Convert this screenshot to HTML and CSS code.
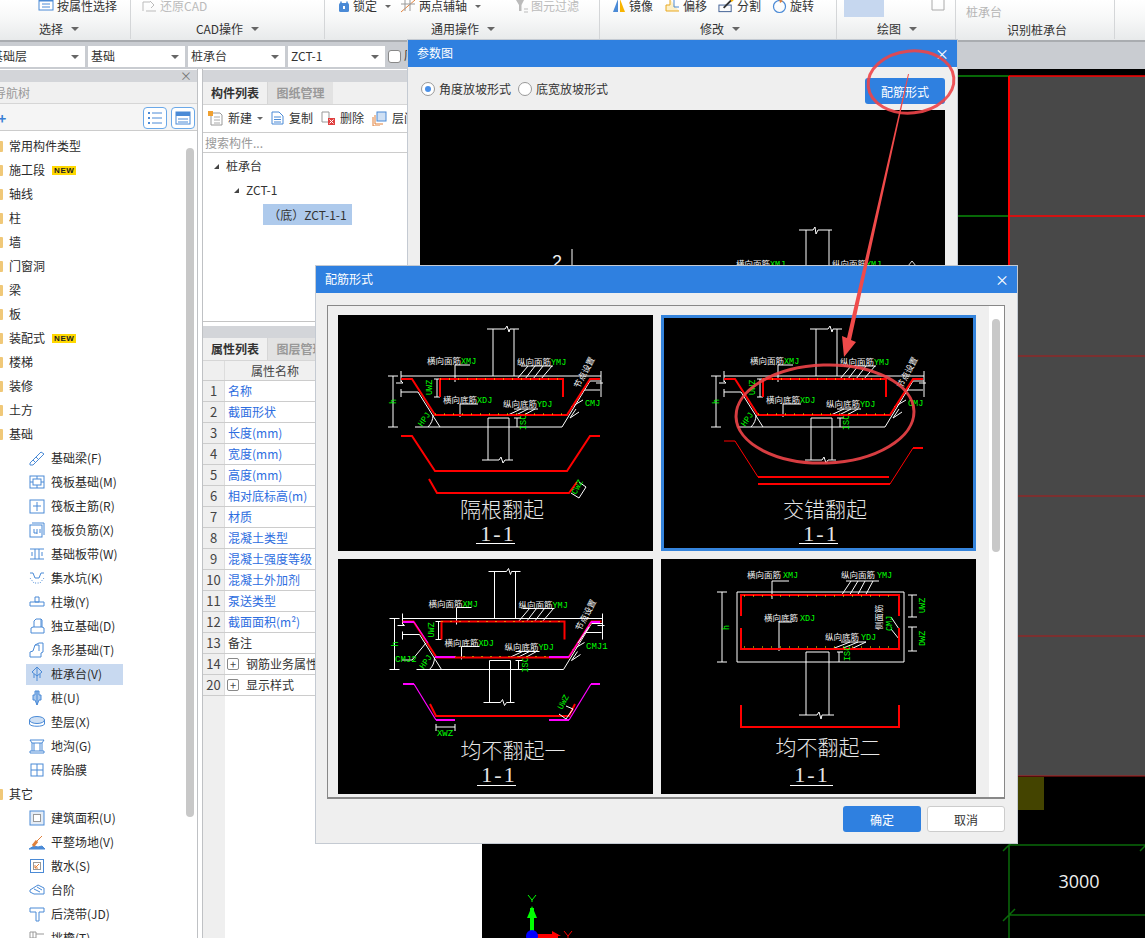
FILE: index.html
```html
<!DOCTYPE html>
<html lang="zh-CN">
<head>
<meta charset="utf-8">
<title>参数图</title>
<link rel="stylesheet" href="styles.css">
</head>
<body>
<div class="app">
  <header class="ribbon">
    <section class="rgroup g1">
      <div class="rtop"><span class="ri"><svg class="svg" width="16" height="15" viewBox="0 0 16 15"><rect x="1" y="-3" width="14" height="14" fill="#fff" stroke="#4a8ad6"/><path d="M1 1H15" stroke="#4a8ad6" stroke-width="3"/><path d="M4 5H12M4 8H12" stroke="#4a8ad6"/></svg>按属性选择</span></div>
      <div class="rlabel">选择<i class="caret"></i></div>
    </section>
    <section class="rgroup g2">
      <div class="rtop"><span class="ri off"><svg class="svg" width="15" height="13" viewBox="0 0 15 13"><path d="M1 11V2H8M14 11H4M8 1L12 5L9 8" fill="none" stroke="#bbb"/></svg>还原CAD</span></div>
      <div class="rlabel">CAD操作<i class="caret"></i></div>
    </section>
    <section class="rgroup g3">
      <div class="rtop">
        <span class="ri"><svg class="svg" width="12" height="13" viewBox="0 0 12 13"><rect x="1" y="3" width="10" height="9" rx="1.500" fill="#4a8ad6"/><path d="M3 4V1.500M9 4V1.500" stroke="#4a8ad6" stroke-width="1.500"/><rect x="5" y="6" width="2" height="3" fill="#fff"/></svg>锁定<i class="caret sm"></i></span>
        <span class="ri"><svg class="svg" width="16" height="14" viewBox="0 0 16 14"><path d="M1 13L15 1" stroke="#e0803a"/><path d="M5 0V12M10 0V12M1 5H15" stroke="#999"/></svg>两点辅轴<i class="caret sm"></i></span>
        <span class="ri off"><svg class="svg" width="12" height="13" viewBox="0 0 12 13"><path d="M0 0H8L5.500 5V11H3V5Z" fill="#bbb"/><path d="M8 9H12M8 12H12" stroke="#bbb"/></svg>图元过滤</span>
      </div>
      <div class="rlabel">通用操作<i class="caret"></i></div>
    </section>
    <section class="rgroup g4">
      <div class="rtop">
        <span class="ri"><svg class="svg" width="14" height="14" viewBox="0 0 14 14"><path d="M6 0V13H1Z" fill="#4a8ad6"/><path d="M8 0V13H13Z" fill="#f8b400"/></svg>镜像</span>
        <span class="ri"><svg class="svg" width="16" height="14" viewBox="0 0 16 14"><path d="M6 0V6H2V12H15" fill="#fdf0c8" stroke="#e8a820"/><path d="M10 0V8H15" fill="none" stroke="#4a8ad6"/></svg>偏移</span>
        <span class="ri"><svg class="svg" width="16" height="14" viewBox="0 0 17 14"><rect x="1" y="6" width="13" height="7" fill="none" stroke="#3a5a90"/><path d="M6 9L14 1" stroke="#333" stroke-width="2"/><path d="M14 2L16 0" stroke="#f8b400" stroke-width="2"/></svg>分割</span>
        <span class="ri"><svg class="svg" width="15" height="15" viewBox="0 0 15 15"><circle cx="7.500" cy="7.500" r="6" fill="none" stroke="#4a8ad6" stroke-width="1.200"/><path d="M7 0L11 2L8 4Z" fill="#e0803a"/></svg>旋转</span>
      </div>
      <div class="rlabel">修改<i class="caret"></i></div>
    </section>
    <section class="rgroup g5">
      <div class="rtop"><span class="blueblock"></span><svg class="squareic" width="16" height="11" viewBox="0 0 16 11"><path d="M2 0V10H14V0" fill="none" stroke="#aaa"/></svg></div>
      <div class="rlabel">绘图<i class="caret"></i></div>
    </section>
    <section class="rgroup g6">
      <div class="rmuted">桩承台</div>
      <div class="rlabel last">识别桩承台</div>
    </section>
    <section class="rgroup g7"></section>
  </header>

  <div class="combobar">
    <div class="combo first"><span class="clip">基础层</span><i class="caret dark"></i></div>
    <div class="combo"><span>基础</span><i class="caret dark"></i></div>
    <div class="combo"><span>桩承台</span><i class="caret dark"></i></div>
    <div class="combo"><span>ZCT-1</span><i class="caret dark"></i></div>
    <span class="check"></span><span class="checktext">底</span>
  </div>

  <main class="workspace">
    <aside class="nav">
      <div class="strip"><span class="stripx">×</span></div>
      <div class="navtitle"><span class="clipt">导航树</span></div>
      <div class="navtools">
        <span class="plus">+</span>
        <span class="toolbtn"><svg width="16" height="14" viewBox="0 0 16 14"><path d="M1 2H3M1 7H3M1 12H3" stroke="#4a8ad6" stroke-width="2"/><path d="M5 2H15M5 7H15M5 12H15" stroke="#4a8ad6"/></svg></span>
        <span class="toolbtn"><svg width="16" height="14" viewBox="0 0 16 14"><rect x="1" y="1" width="14" height="12" fill="#fff" stroke="#4a8ad6"/><rect x="1" y="1" width="14" height="4" fill="#4a8ad6"/><path d="M3 8H13M3 11H13" stroke="#4a8ad6"/></svg></span>
      </div>
      <div class="navbody">
        <ul class="tree">
          <li class="node"><i class="folder"></i>常用构件类型</li>
          <li class="node"><i class="folder"></i>施工段<b class="new">NEW</b></li>
          <li class="node"><i class="folder"></i>轴线</li>
          <li class="node"><i class="folder"></i>柱</li>
          <li class="node"><i class="folder"></i>墙</li>
          <li class="node"><i class="folder"></i>门窗洞</li>
          <li class="node"><i class="folder"></i>梁</li>
          <li class="node"><i class="folder"></i>板</li>
          <li class="node"><i class="folder"></i>装配式<b class="new">NEW</b></li>
          <li class="node"><i class="folder"></i>楼梯</li>
          <li class="node"><i class="folder"></i>装修</li>
          <li class="node"><i class="folder"></i>土方</li>
          <li class="node"><i class="folder"></i>基础</li>
          <li class="leafrow"><span class="leaf"><svg class="ic" viewBox="0 0 16 16"><path d="M1 13L12 2L15 4L4 15H1ZM4 10L7 13M7 7L10 10"/></svg>基础梁(F)</span></li>
          <li class="leafrow"><span class="leaf"><svg class="ic" viewBox="0 0 16 16"><rect x="1" y="2" width="14" height="12"/><rect x="4" y="5" width="8" height="6"/><path d="M1 8H4M12 8H15M8 2V5M8 11V14"/></svg>筏板基础(M)</span></li>
          <li class="leafrow"><span class="leaf"><svg class="ic" viewBox="0 0 16 16"><rect x="1" y="2" width="14" height="13"/><path d="M8 4V13M4 8H12"/></svg>筏板主筋(R)</span></li>
          <li class="leafrow"><span class="leaf"><svg class="ic" viewBox="0 0 16 16"><rect x="1" y="3" width="12" height="12"/><path d="M3 1H15V13M5 7V11H8M8 7V12M11 7V11"/></svg>筏板负筋(X)</span></li>
          <li class="leafrow"><span class="leaf"><svg class="ic" viewBox="0 0 16 16"><path d="M1 3H15M1 13H15M6 3V13M10 3V13M3 6V10M13 6V10"/></svg>基础板带(W)</span></li>
          <li class="leafrow"><span class="leaf"><svg class="ic" viewBox="0 0 16 16"><path d="M1 3H4L6 8H10L12 3H15"/><path d="M1 8L5 13H11L15 8" stroke-dasharray="1 1.500"/></svg>集水坑(K)</span></li>
          <li class="leafrow"><span class="leaf"><svg class="ic" viewBox="0 0 16 16"><path d="M6 3H10V8H6ZM1 8H15V12H1Z"/></svg>柱墩(Y)</span></li>
          <li class="leafrow"><span class="leaf"><svg class="ic" viewBox="0 0 16 16"><path d="M5 9V3L7 1H12V9M2 15V10L4 9H13L15 10V15ZM12 1L13 2V9"/></svg>独立基础(D)</span></li>
          <li class="leafrow"><span class="leaf"><svg class="ic" viewBox="0 0 16 16"><path d="M1 15V10L4 9L6 3L10 1H14V10L12 11V15ZM6 3H10L10 9"/></svg>条形基础(T)</span></li>
          <li class="leafrow"><span class="leaf sel"><svg class="ic" viewBox="0 0 16 16"><path d="M8 1L13 6L8 10L3 6ZM8 1V15M5 8V12M11 8V12"/></svg>桩承台(V)</span></li>
          <li class="leafrow"><span class="leaf"><svg class="ic" viewBox="0 0 16 16"><path d="M6 1H10V5H12V10H10L8 15L6 10H4V5H6Z" fill="#a8c8ee"/><path d="M8 1V15"/></svg>桩(U)</span></li>
          <li class="leafrow"><span class="leaf"><svg class="ic" viewBox="0 0 16 16"><ellipse cx="8" cy="6" rx="7.500" ry="3.500" fill="#cfe0f4"/><path d="M0.500 6V10C1 13 15 13 15.500 10V6"/></svg>垫层(X)</span></li>
          <li class="leafrow"><span class="leaf"><svg class="ic" viewBox="0 0 16 16"><path d="M1 2H15L13 5H3ZM3 5V13M5 5V13M11 5V13M13 5V13M1 13H15V15H1Z"/></svg>地沟(G)</span></li>
          <li class="leafrow"><span class="leaf"><svg class="ic" viewBox="0 0 16 16"><rect x="2" y="2" width="12" height="12"/><path d="M8 2V14M2 8H14"/></svg>砖胎膜</span></li>
          <li class="node"><i class="folder"></i>其它</li>
          <li class="leafrow"><span class="leaf"><svg class="ic" viewBox="0 0 16 16"><rect x="1" y="1" width="14" height="14" fill="#e4ecf6"/><rect x="4.500" y="4.500" width="7" height="7" stroke="#999" fill="#fff"/></svg>建筑面积(U)</span></li>
          <li class="leafrow"><span class="leaf"><svg class="ic" viewBox="0 0 16 16"><path d="M0 15L5 12L9 13L13 12L16 15Z" fill="#4a8ad6"/><path d="M4 12L8 7" stroke="#e0803a" stroke-width="3"/><path d="M8 7L13 2" stroke="#e0803a"/></svg>平整场地(V)</span></li>
          <li class="leafrow"><span class="leaf"><svg class="ic" viewBox="0 0 16 16"><rect x="1.500" y="1.500" width="13" height="13"/><rect x="4.500" y="4.500" width="7" height="7" stroke="#999"/><path d="M10 6L6 10M6 7V10H9" stroke="#e0803a"/></svg>散水(S)</span></li>
          <li class="leafrow"><span class="leaf"><svg class="ic" viewBox="0 0 16 16"><path d="M1 8L9 3L15 6V12H5L1 10ZM5 7L11 10M8 5L13 8"/></svg>台阶</span></li>
          <li class="leafrow"><span class="leaf"><svg class="ic" viewBox="0 0 16 16"><path d="M1 2H15V6H10V15H7V6H1Z"/></svg>后浇带(JD)</span></li>
          <li class="leafrow"><span class="leaf"><svg class="ic" viewBox="0 0 16 16"><path d="M1 2H7V15H1ZM1 8H7M4 2V15M7 4H15" stroke="#999"/></svg>挑檐(T)</span></li>
        </ul>
        <div class="navscroll"><span class="navthumb"></span></div>
      </div>
    </aside>

    <section class="mid">
      <div class="strip"></div>
      <div class="tabs">
        <span class="tab on">构件列表</span><span class="tab">图纸管理</span>
      </div>
      <div class="midtools">
        <span class="mt t-new"><svg class="svg" width="15" height="15" viewBox="0 0 15 15"><path d="M3 2H12L14 4V14H3Z" fill="#fff" stroke="#999"/><path d="M6 6H12M6 9H12M6 12H12" stroke="#aaa"/><rect x="0" y="0" width="5" height="5" fill="#f0a030"/></svg>新建<i class="caret sm"></i></span>
        <span class="mt t-copy"><svg class="svg" width="13" height="14" viewBox="0 0 13 14"><path d="M1 1H8L12 5V13H1Z" fill="#fff" stroke="#4a8ad6"/><path d="M3 6H10M3 8.500H10M3 11H10" stroke="#4a8ad6"/></svg>复制</span>
        <span class="mt t-del"><svg class="svg" width="14" height="14" viewBox="0 0 14 14"><path d="M1 1H8V11H1Z" fill="none" stroke="#999"/><rect x="7" y="7" width="7" height="7" fill="#e04040"/><path d="M8.500 8.500L12.500 12.500M12.500 8.500L8.500 12.500" stroke="#fff"/></svg>删除</span>
        <span class="mt"><svg class="svg" width="15" height="15" viewBox="0 0 15 15"><rect x="5" y="1" width="9" height="9" fill="#cfe0f4" stroke="#4a8ad6"/><path d="M3 4V13H11M1 6V15H8" fill="none" stroke="#e0803a"/></svg>层间复制</span>
      </div>
      <div class="search">搜索构件...</div>
      <div class="comptree">
        <div class="ctrow"><i class="tri"></i>桩承台</div>
        <div class="ctrow l2"><i class="tri"></i>ZCT-1</div>
        <div class="ctrow l3"><span class="ctsel">（底）ZCT-1-1</span></div>
      </div>
      <div class="strip"></div>
      <div class="tabs small">
        <span class="tab on">属性列表</span><span class="tab">图层管理</span>
      </div>
      <div class="ptable">
        <div class="prow head"><span class="pn"></span><span class="pname">属性名称</span></div>
        <div class="prow"><span class="pn">1</span><span class="pname link">名称</span></div>
        <div class="prow"><span class="pn">2</span><span class="pname link">截面形状</span></div>
        <div class="prow"><span class="pn">3</span><span class="pname link">长度(mm)</span></div>
        <div class="prow"><span class="pn">4</span><span class="pname link">宽度(mm)</span></div>
        <div class="prow"><span class="pn">5</span><span class="pname link">高度(mm)</span></div>
        <div class="prow"><span class="pn">6</span><span class="pname link">相对底标高(m)</span></div>
        <div class="prow"><span class="pn">7</span><span class="pname link">材质</span></div>
        <div class="prow"><span class="pn">8</span><span class="pname link">混凝土类型</span></div>
        <div class="prow"><span class="pn">9</span><span class="pname link">混凝土强度等级</span></div>
        <div class="prow"><span class="pn">10</span><span class="pname link">混凝土外加剂</span></div>
        <div class="prow"><span class="pn">11</span><span class="pname link">泵送类型</span></div>
        <div class="prow"><span class="pn">12</span><span class="pname link">截面面积(m²)</span></div>
        <div class="prow"><span class="pn">13</span><span class="pname">备注</span></div>
        <div class="prow"><span class="pn">14</span><span class="pname"><i class="pbox">+</i>钢筋业务属性</span></div>
        <div class="prow"><span class="pn">20</span><span class="pname"><i class="pbox">+</i>显示样式</span></div>
      </div>
    </section>

    <section class="cad">
      <svg class="cadsvg" width="663" height="869" viewBox="482 69 663 869">
        <rect x="1009" y="76" width="136" height="700" fill="#484848"/>
        <path d="M957 76H1009M957 216H1009" stroke="#0a8a0a" stroke-width="1.500"/>
        <path d="M1009 76H1145M1009 216H1145" stroke="#f00" stroke-width="1.500"/>
        <path d="M1009 356H1145M1009 496H1145M1009 636H1145M1009 776H1145" stroke="#b01818"/>
        <path d="M1009 76V776" stroke="#f00" stroke-width="2"/>
        <rect x="1017" y="777" width="27" height="33" fill="#444400"/>
        <path d="M1009 845H1145M1009 915H1145M1009 845V938M1003 851L1015 839M1003 921L1015 909M1140 851L1145 846" stroke="#0a6a0a" stroke-width="1.500"/>
        <text x="1079" y="888" class="cadtext">3000</text>
        <path d="M532 935V908" stroke="#0f0" stroke-width="4"/>
        <path d="M532 906L527 918H537Z" fill="#0f0"/>
        <path d="M532 902V900M528 895L532 900L536 895" stroke="#0f0" fill="none"/>
        <path d="M535 936H558" stroke="#f00" stroke-width="4"/>
        <path d="M552 931L561 936H552Z" fill="#f00"/>
        <circle cx="532" cy="936" r="6" fill="#00f"/>
        <path d="M564 931L568 936L572 931M568 936V938" stroke="#f00" fill="none"/>
      </svg>
    </section>
  </main>

  <div class="dialog d1">
    <div class="dtitle">参数图<span class="dx">×</span></div>
    <div class="d1head">
      <label class="radio"><i class="rd on"></i>角度放坡形式</label>
      <label class="radio"><i class="rd"></i>底宽放坡形式</label>
      <button class="btn primary wide" type="button">配筋形式</button>
    </div>
    <div class="d1canvas">
      <svg width="525" height="160" viewBox="420 110 525 160">
        <path d="M799 230H813L815 227L816 234L818 230H832M806 230V266M829 230V266M572 249V266" stroke="#fff" fill="none"/>
        <text x="552" y="268" class="big2">2</text>
        <text x="736" y="267" class="lb">横向面筋<tspan class="gr">XMJ</tspan></text>
        <text x="832" y="267" class="lb">纵向面筋<tspan class="gr">YMJ</tspan></text>
        <path d="M908 266L912 261L916 266" stroke="#ddd" fill="none"/>
      </svg>
    </div>
  </div>

  <div class="dialog d2">
    <div class="dtitle">配筋形式<span class="dx">×</span></div>
    <div class="d2body">
      <div class="listbox">
        <div class="grid">
          <figure class="panel">
            <svg width="315" height="236" viewBox="0 0 315 236">
              <defs>
                <g id="base">
                  <path class="w" d="M149 14H167L169 11L171 17L172 14H181M155 14V61M176 14V61M63 61H263M63 56V67M58 68H65L63 66M63 74V82M63 77H80L102 112M77 112H224L252 66H263M245 75H262M263 56V82M258 68H265M55 61V112M50 61H60M50 112H60M99 64V82M96 64H102M96 82H102M150 145V103H171V145M144 145H161L163 142L165 148L167 145H175M179 103V112M176 103H183M90 112A17 17 0 0 0 95 100M132 50H117V67M183 51H215M190 51L179 64M197 51L187 64M205 51L195 64M214 51L203 64M140 89H122V102M176 94H200M183 94L170 100M190 94L178 100M197 94L186 100M238 94L232 103L241 97M233 92L245 85"/>
                  <text x="89" y="49" class="lb">横向面筋<tspan class="gr">XMJ</tspan></text>
                  <text x="179" y="50" class="lb">纵向面筋<tspan class="gr">YMJ</tspan></text>
                  <text x="105" y="88" class="lb">横向底筋<tspan class="gr">XDJ</tspan></text>
                  <text x="165" y="92" class="lb">纵向底筋<tspan class="gr">YDJ</tspan></text>
                  <text x="0" y="0" class="lb gr" transform="translate(94 80) rotate(-90)">UWZ</text>
                  <text x="0" y="0" class="lb gr" transform="translate(58 89) rotate(-90)">h</text>
                  <text x="0" y="0" class="lb gr" transform="translate(84 112) rotate(-55)">HPJ</text>
                  <text x="0" y="0" class="lb gr" transform="translate(188 115) rotate(-90)">ISC</text>
                  <text x="0" y="0" class="lb" transform="translate(241 74) rotate(-62)">节点设置</text>
                </g>
                <g id="toprebar">
                  <path class="r2" d="M63 64H74L97 100H229L252 64H262M102 82V64H225V82"/>
                  <path class="dots" d="M102 64H225M97 99H229"/>
                </g>
              </defs>
              <use href="#base"/><use href="#toprebar"/>
              <text x="247" y="91" class="lb gr">CMJ</text>
              <path class="r2" d="M63 121H74L97 156H229L252 121H262M91 164L99 178H231L239 167"/>
              <path class="w" d="M233 178L241 183L248 172L241 167"/>
              <text x="0" y="0" class="lb gr" transform="translate(238 180) rotate(-62)">CWZ</text>
              <text x="164" y="202" class="ttl">隔根翻起</text>
              <text x="160" y="226" class="ttl one">1-1</text>
              <path class="w" d="M138 228.500H177"/>
            </svg>
          </figure>
          <figure class="panel chosen">
            <svg width="315" height="236" viewBox="0 0 315 236">
              <use href="#base"/><use href="#toprebar"/>
              <text x="247" y="91" class="lb gr">CMJ</text>
              <path class="r1" d="M63 126H74L97 162"/><path class="r2" d="M97 162H228M97 169H229"/><path class="r1" d="M229 169L252 133"/><path class="r2" d="M252 133H262"/>
              <text x="164" y="202" class="ttl">交错翻起</text>
              <text x="160" y="226" class="ttl one">1-1</text>
              <path class="w" d="M138 228.500H177"/>
            </svg>
          </figure>
          <figure class="panel">
            <svg width="315" height="235" viewBox="0 0 315 235">
              <g transform="translate(1.500 -1.500)"><use href="#base"/><use href="#toprebar"/></g>
              <path class="m2" d="M65 63H76M97 98H117M211 98H231M253 63H262"/>
              <path class="m1" d="M76 63L90 84M231 98L253 63"/>
              <path class="w" d="M64 101H74L88 84M240 84L251 68"/>
              <text x="57" y="103" class="lb gr wide2">CMJ2</text>
              <text x="248" y="90" class="lb gr wide2">CMJ1</text>
              <path class="m2" d="M65 125H76M98 161H117M211 161H231M253 125H262"/>
              <path class="m1" d="M76 125L98 161M231 161L253 125"/>
              <path class="r2" d="M92 145L98 157H231L237 145"/>
              <path class="w" d="M98 165V172M117 165V172M98 168H117M228 147L235 150L228 160L221 155"/>
              <text x="107" y="177" class="lb gr wide2" text-anchor="middle">XWZ</text>
              <text x="0" y="0" class="lb gr" transform="translate(224 151) rotate(-62)">UWZ</text>
              <text x="175" y="199" class="ttl">均不翻起一</text>
              <text x="161" y="223" class="ttl one">1-1</text>
              <path class="w" d="M139 226.500H178"/>
            </svg>
          </figure>
          <figure class="panel">
            <svg width="315" height="235" viewBox="0 0 315 235">
              <path class="w" d="M76 33H243V103H76ZM61 33V103M56 33H66M56 103H66M145 156V93H168V156M138 156H156L158 153L160 160L161 156H173M178 93V103M176 93H182M111 22H128M111 22V40M185 22H218M190 22L180 37M197 22L188 37M204 22L196 37M212 22L204 37M131 63H118V92M180 83H205M189 83L171 90M197 83L180 90M205 83L190 90M247 36H256M251 36V58M247 58H256M247 68H256M251 68V92M247 92H256M230 58L238 70L238 80L230 70"/>
              <path class="r2" d="M80 57V36H238V57M80 69V90H238V69M80 146V168H238V146"/>
              <path class="dots" d="M83 37H236M83 88H236"/>
              <text x="86" y="19" class="lb">横向面筋 <tspan class="gr">XMJ</tspan></text>
              <text x="180" y="19" class="lb">纵向面筋 <tspan class="gr">YMJ</tspan></text>
              <text x="103" y="62" class="lb">横向底筋 <tspan class="gr">XDJ</tspan></text>
              <text x="164" y="81" class="lb">纵向底筋 <tspan class="gr">YDJ</tspan></text>
              <text x="0" y="0" class="lb gr" transform="translate(68 71) rotate(-90)">h</text>
              <text x="0" y="0" class="lb" transform="translate(221 71) rotate(-90)">侧面筋</text>
              <text x="0" y="0" class="lb gr" transform="translate(231 72) rotate(-90)">CMJ</text>
              <text x="0" y="0" class="lb gr" transform="translate(264 54) rotate(-90)">UWZ</text>
              <text x="0" y="0" class="lb gr" transform="translate(264 87) rotate(-90)">DWZ</text>
              <text x="0" y="0" class="lb gr" transform="translate(189 102) rotate(-90)">ISC</text>
              <text x="167" y="196" class="ttl">均不翻起二</text>
              <text x="151" y="223" class="ttl one">1-1</text>
              <path class="w" d="M129 226.500H172"/>
            </svg>
          </figure>
        </div>
        <div class="lscroll"><span class="lthumb"></span></div>
      </div>
      <div class="dfoot">
        <button class="btn primary" type="button">确定</button>
        <button class="btn plain" type="button">取消</button>
      </div>
    </div>
  </div>

  <svg class="marks" width="1145" height="938" viewBox="0 0 1145 938">
    <ellipse cx="911" cy="82" rx="43" ry="31" class="mk" transform="rotate(-6 911 82)"/>
    <ellipse cx="825" cy="414" rx="89" ry="49" class="mk" transform="rotate(-2 825 414)"/>
    <path d="M908 74L909 74L851 340L856 342L844 357L842 336L847 338Z" fill="#f04a4a"/>
  </svg>
</div>
</body>
</html>
```
FILE: styles.css
```css
* { box-sizing: border-box; }
html, body { margin: 0; padding: 0; }
body { width: 1145px; height: 938px; overflow: hidden; background: #fff; color: #333; font: 12px/1.2 "Noto Sans CJK SC", "Liberation Sans", sans-serif; }
ul { list-style: none; margin: 0; padding: 0; }
figure { margin: 0; }
i { font-style: normal; }
svg { display: block; }
.svg { flex: none; }

.app { position: relative; width: 1145px; height: 938px; overflow: hidden; display: flex; flex-direction: column; }

/* ribbon */
.ribbon { height: 42px; flex: none; display: flex; background: linear-gradient(#fff 0, #f7f8f8 45%, #e8eaeb 100%); border-bottom: 2px solid #a9acb0; }
.rgroup { display: flex; flex-direction: column; border-right: 1px solid #d4d6d8; height: 39px; overflow: hidden; }
.g1 { width: 131px; padding-left: 38px; }
.g2 { width: 194px; padding-left: 11px; }
.g3 { width: 275px; padding-left: 13px; }
.g4 { width: 237px; padding-left: 12px; }
.g5 { width: 119px; padding-left: 7px; }
.g6 { width: 159px; padding-left: 10px; }
.g7 { flex: 1; border-right: 0; }
.rtop { height: 18px; display: flex; gap: 11px; align-items: flex-start; }
.ri { display: flex; align-items: center; gap: 3px; height: 12px; line-height: 12px; white-space: nowrap; color: #333; }
.g3 .rtop { gap: 9px; }
.g3 .ri:last-child { margin-left: 26px; }
.ri.off { color: #bbb; }
.rlabel { height: 20px; margin-top: 2px; display: flex; align-items: center; justify-content: center; gap: 8px; color: #333; margin-left: calc(var(--pl, 0px) * -1); }
.g1 .rlabel { --pl: 38px; padding-right: 12px; }
.g2 .rlabel { --pl: 11px; }
.g3 .rlabel { --pl: 13px; padding-right: 0; padding-left: 2px; }
.g4 .rlabel { --pl: 12px; padding-left: 4px; }
.g5 .rlabel { --pl: 7px; padding-left: 2px; }
.rlabel.last { margin: 1px 0 0 41px; justify-content: flex-start; height: 18px; }
.rmuted { height: 18px; margin-top: 3px; color: #b5b5b5; line-height: 18px; }
.caret { display: inline-block; width: 0; height: 0; border: 4px solid transparent; border-top: 4px solid #666; border-bottom: 0; }
.caret.sm { margin-left: 5px; border-width: 3px 3px 0; }
.caret.dark { border-top-color: #666; }
.blueblock { width: 40px; height: 17px; background: #c6d7ef; margin-left: 0; }
.squareic { margin-left: 35px; }

/* combo bar */
.combobar { height: 27px; flex: none; display: flex; align-items: flex-start; padding-top: 4px; gap: 3px; background: #c9ccd1; }
.combo { width: 97px; height: 21px; background: #fff; display: flex; align-items: center; justify-content: space-between; padding: 0 6px 0 3px; white-space: nowrap; }
.combo.first { width: 85px; padding-left: 0; }
.clip { margin-left: -9px; }
.check { width: 13px; height: 13px; background: #fff; border: 1px solid #888; border-radius: 3px; margin: 4px 0 0 0; }
.checktext { margin: 2px 0 0 0; }

/* workspace */
.workspace { flex: 1; min-height: 0; display: flex; background: #fff; }
.strip { height: 12px; margin-top: 1px; background: #d3d5d9; position: relative; display: flex; justify-content: flex-end; flex: none; }
.stripx { color: #777; line-height: 12px; font-size: 12px; padding-right: 5px; }

.nav { width: 198px; flex: none; border-right: 1px solid #bfc1c4; display: flex; flex-direction: column; overflow: hidden; }
.navtitle { height: 22px; flex: none; background: #f0f0f0; color: #999; line-height: 22px; border-bottom: 1px solid #d6d6d6; overflow: hidden; }
.clipt { margin-left: -6px; }
.navtools { height: 27px; flex: none; display: flex; align-items: center; gap: 4px; padding: 1px 2px 0 0; justify-content: flex-end; background: #f5f5f5; border-bottom: 1px solid #ccc; position: relative; }
.plus { margin-right: auto; color: #3a7fd5; font-weight: 700; font-size: 14px; margin-left: -2px; line-height: 14px; }
.toolbtn { width: 24px; height: 22px; border: 1px solid #6aa8e8; border-radius: 4px; background: #fff; display: flex; align-items: center; justify-content: center; }
.navbody { flex: 1; min-height: 0; display: flex; padding-top: 3px; }
.tree { width: 186px; flex: none; }
.node { height: 24px; display: flex; align-items: center; white-space: nowrap; color: #2b2b2b; }
.folder { width: 3px; height: 11px; background: #f0c878; margin-right: 6px; flex: none; border-radius: 0 1px 1px 0; }
.new { margin-left: 7px; background: #ffd800; color: #222; font: 700 8px/9px "Liberation Sans", sans-serif; padding: 0 2px; letter-spacing: .6px; height: 9px; }
.leafrow { height: 24px; display: flex; align-items: center; }
.leaf { margin-left: 26px; width: 97px; height: 21px; display: flex; align-items: center; white-space: nowrap; padding-left: 3px; gap: 6px; color: #2b2b2b; }
.leaf.sel { background: #c8d9f0; }
.ic { width: 16px; height: 16px; flex: none; fill: none; stroke: #4a8ad6; stroke-width: 1; }
.navscroll { width: 11px; padding-top: 14px; }
.navthumb { display: block; width: 8px; height: 669px; background: #c8c8c8; border-radius: 4px; }

.mid { width: 280px; flex: none; margin-left: 4px; border-left: 1px solid #bfc1c4; display: flex; flex-direction: column; overflow: hidden; }
.tabs { height: 22px; flex: none; display: flex; background: #f0f0f0; border-bottom: 1px solid #d6d6d6; box-sizing: content-box; }
.tab { width: 65px; text-align: center; line-height: 22px; color: #999; background: #e2e2e2; font-weight: 700; }
.tab.on { color: #333; background: #f0f0f0; border-right: 1px solid #d6d6d6; }
.midtools { height: 28px; flex: none; display: flex; align-items: center; padding-left: 5px; gap: 8px; white-space: nowrap; border-bottom: 1px solid #ccc; }
.mt { display: flex; align-items: center; gap: 5px; }
.t-new .caret.sm { margin-left: 0; }
.search { height: 20px; flex: none; color: #999; line-height: 20px; padding-left: 2px; border-bottom: 1px solid #ccc; }
.comptree { height: 169px; flex: none; padding-top: 1px; border-bottom: 1px solid #c4c4c4; }
.ctrow { height: 24px; display: flex; align-items: center; padding-left: 11px; gap: 7px; }
.ctrow.l2 { padding-left: 31px; }
.ctrow.l3 { padding-left: 60px; }
.ctsel { background: #aecaec; height: 21px; line-height: 21px; width: 89px; text-align: center; color: #333; }
.tri { width: 0; height: 0; border-left: 5px solid transparent; border-bottom: 5px solid #444; }
.comptree + .strip { margin-top: 4px; }
.ptable { flex: 1; background: linear-gradient(to right, #efefef 22px, #fff 22px); }
.prow { height: 21px; display: flex; border-bottom: 1px solid #ccc; line-height: 20px; }
.prow.head { height: 20px; line-height: 19px; background: #f0f0f0; }
.pn { width: 22px; flex: none; text-align: center; font-size: 13px; color: #444; border-right: 1px solid #ddd; background: #efefef; }
.pname { padding-left: 3px; white-space: nowrap; display: flex; align-items: center; }
.head .pname { width: 100px; justify-content: center; padding-left: 0; background: #f0f0f0; color: #444; }
.link { color: #2d6de0; }
.pbox { width: 12px; height: 12px; border: 1px solid #888; border-radius: 2px; font-size: 11px; line-height: 10px; text-align: center; margin: 0 7px 0 -1px; color: #444; }

.cad { flex: 1; background: #000; overflow: hidden; }
.cadtext { font: 18px "Open Sans", sans-serif; fill: #eee; text-anchor: middle; }

/* dialogs — windows floating over the workspace */
.dialog { position: absolute; background: #efefef; box-shadow: 0 0 0 1px #c4cad2; }
.d1 { left: 408px; top: 40px; width: 549px; height: 300px; }
.d2 { left: 316px; top: 266px; width: 701px; height: 577px; }
.dtitle { height: 27px; background: #2f80e0; color: #fff; line-height: 26px; padding: 0 9px; display: flex; justify-content: space-between; }
.dx { font-size: 14px; line-height: 26px; margin-right: -1px; }
.d1head { height: 43px; display: flex; align-items: flex-start; padding: 11px 12px 0 13px; gap: 7px; }
.radio { display: flex; align-items: center; gap: 4px; color: #333; white-space: nowrap; margin-top: 4px; }
.rd { width: 14px; height: 14px; border: 1px solid #999; border-radius: 50%; background: #fff; display: flex; align-items: center; justify-content: center; }
.rd.on::after { content: ""; width: 6px; height: 6px; border-radius: 50%; background: #4a90e8; }
.btn { font: 12px "Noto Sans CJK SC", sans-serif; width: 78px; height: 26px; border-radius: 3px; border: 0; padding: 0; }
.btn.primary { background: #2f80e0; color: #fff; }
.btn.wide { width: 80px; margin-left: auto; }
.btn.plain { background: #fff; color: #333; border: 1px solid #ccc; }
.d1canvas { margin: 0 12px; height: 200px; background: #000; overflow: hidden; }

.d2body { padding: 12px 12px 0 11px; }
.listbox { height: 494px; border: 1px solid #888; border-bottom-width: 2px; display: flex; overflow: hidden; background: #efefef; }
.grid { width: 661px; flex: none; display: grid; grid-template-columns: 315px 315px; grid-auto-rows: min-content; gap: 8px; padding: 9px 0 0 10px; }
.panel { background: #000; height: 236px; position: relative; }
.panel:nth-child(n+3) { height: 235px; }
.chosen { outline: 3px solid #3584dc; outline-offset: -3px; }
.lscroll { flex: 1; background: #fff; padding: 13px 0 0 3px; }
.lthumb { display: block; width: 8px; height: 233px; background: #c8c8c8; border-radius: 4px; }
.dfoot { display: flex; justify-content: flex-end; gap: 6px; padding-top: 7px; }

/* CAD drawings */
.w { stroke: #fff; fill: none; stroke-width: 1; }
.r2 { stroke: #f00; fill: none; stroke-width: 2; }
.r1 { stroke: #f00; fill: none; stroke-width: 1; }
.m2 { stroke: #f0f; fill: none; stroke-width: 2; }
.m1 { stroke: #f0f; fill: none; stroke-width: 1.200; }
.dots { stroke: #ff0; fill: none; stroke-width: 1; stroke-dasharray: 1 8; }
.lb { fill: #f4f4f4; font: 8.5px "Noto Sans CJK SC", sans-serif; }
.gr, .lb.gr { fill: #0f0; font-family: "Liberation Mono", monospace; }
.wide2 { font-size: 9px; }
.ttl { fill: #e6e6e6; font: 300 21px "Noto Sans CJK SC", sans-serif; text-anchor: middle; }
.ttl.one { font: 22px "Liberation Serif", serif; letter-spacing: 2px; }
.big2 { fill: #eee; font: 18px "Liberation Sans", sans-serif; }

/* hand-drawn red annotations over everything */
.marks { position: absolute; left: 0; top: 0; pointer-events: none; }
.mk { fill: none; stroke: #ee4448; stroke-width: 3; opacity: .9; }
```
